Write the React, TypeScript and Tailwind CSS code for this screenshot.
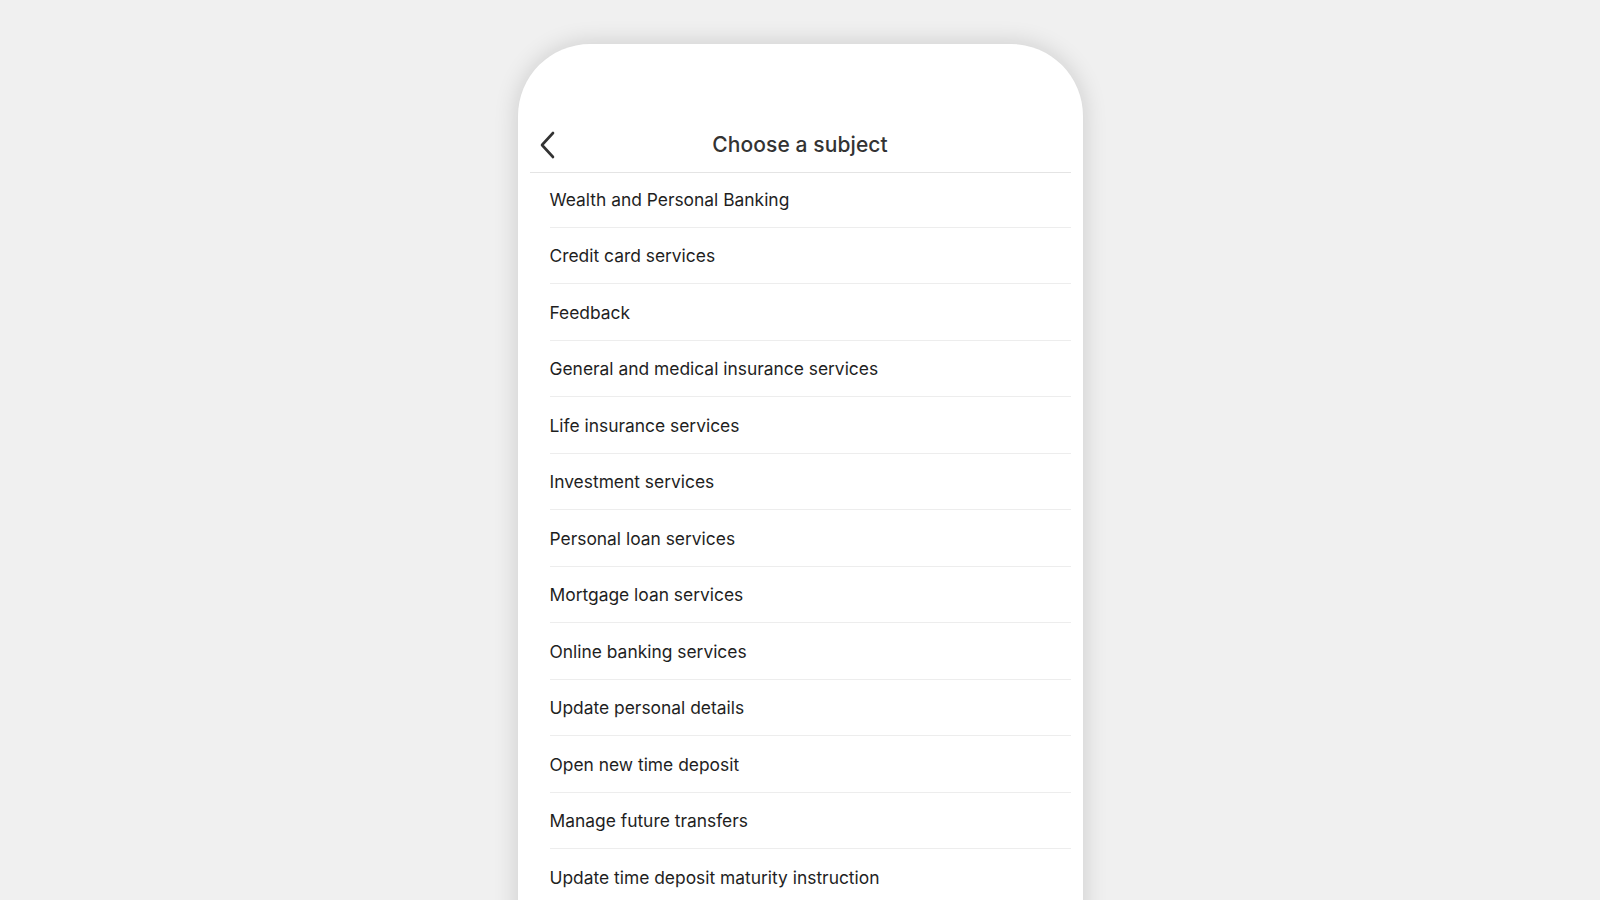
import React from "react";

const items = [
  "Wealth and Personal Banking",
  "Credit card services",
  "Feedback",
  "General and medical insurance services",
  "Life insurance services",
  "Investment services",
  "Personal loan services",
  "Mortgage loan services",
  "Online banking services",
  "Update personal details",
  "Open new time deposit",
  "Manage future transfers",
  "Update time deposit maturity instruction",
];

export default function App() {
  return (
    <div
      className="w-full h-screen bg-[#f0f0f0] flex justify-center overflow-hidden"
      style={{ fontFamily: "Inter, 'Liberation Sans', sans-serif" }}
    >
      <div className="mt-[44px] w-[565px] h-[900px] shrink-0 bg-white rounded-t-[72px] shadow-[0_0_24px_rgba(0,0,0,0.16)] pt-[74px]">
        <div className="mx-[12px]">
          <div className="relative h-[55px] flex items-center justify-center border-b border-[#e4e4e4]">
            <svg
              className="absolute left-[9px] top-1/2 -translate-y-1/2"
              width="18"
              height="28"
              viewBox="0 0 18 28"
              fill="none"
            >
              <path
                d="M14 2 L3 14 L14 26"
                stroke="#333333"
                strokeWidth="2.6"
                strokeLinecap="round"
                strokeLinejoin="round"
              />
            </svg>
            <span className="text-[21px] font-medium text-[#333333] tracking-[0.1px]">
              Choose a subject
            </span>
          </div>
          <ul className="ml-[20px]">
            {items.map((t) => (
              <li
                key={t}
                className="h-[56.5px] first:h-[54.5px] pt-[2px] first:pt-0 flex items-center border-b border-[#ededed] text-[17.4px] text-[#1f1f1f]"
              >
                {t}
              </li>
            ))}
          </ul>
        </div>
      </div>
    </div>
  );
}
